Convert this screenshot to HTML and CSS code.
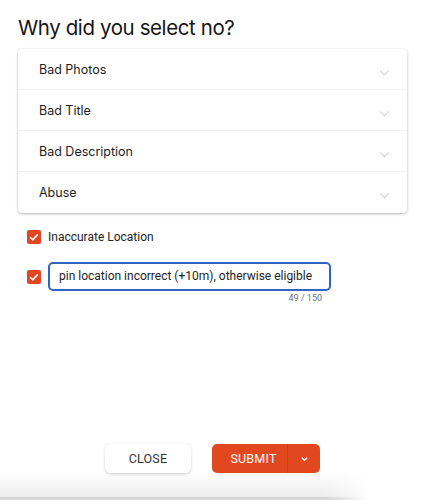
FILE: index.html
```html
<!DOCTYPE html>
<html lang="en">
<head>
    <meta charset="UTF-8">
    <meta name="viewport" content="width=device-width, initial-scale=1.0">
    <title>Why did you select no?</title>
    <link rel="stylesheet" href="styles.css">
</head>
<body>
    <div class="dialog">
        <h1 class="title">Why did you select no?</h1>

        <div class="reasons">
            <div class="reason">
                <span>Bad Photos</span>
                <svg class="chevron" viewBox="0 0 12 8"><path d="M1 1.5l5 5 5-5"/></svg>
            </div>
            <div class="reason">
                <span>Bad Title</span>
                <svg class="chevron" viewBox="0 0 12 8"><path d="M1 1.5l5 5 5-5"/></svg>
            </div>
            <div class="reason">
                <span>Bad Description</span>
                <svg class="chevron" viewBox="0 0 12 8"><path d="M1 1.5l5 5 5-5"/></svg>
            </div>
            <div class="reason">
                <span>Abuse</span>
                <svg class="chevron" viewBox="0 0 12 8"><path d="M1 1.5l5 5 5-5"/></svg>
            </div>
        </div>

        <div class="check-row">
            <span class="checkbox"><svg viewBox="0 0 14 14"><path d="M3.2 7.2l2.6 2.6 5-5.4"/></svg></span>
            <span class="check-label">Inaccurate Location</span>
        </div>

        <div class="check-row note-row">
            <span class="checkbox"><svg viewBox="0 0 14 14"><path d="M3.2 7.2l2.6 2.6 5-5.4"/></svg></span>
            <div class="note">
                <div class="note-input">pin location incorrect (+10m), otherwise eligible</div>
                <div class="counter">49 / 150</div>
            </div>
        </div>

        <div class="actions">
            <button class="btn-close">CLOSE</button>
            <div class="btn-submit">
                <span class="submit-main">SUBMIT</span>
                <span class="submit-more">
                    <svg viewBox="0 0 10 6"><path d="M2 1.5l3 3 3-3"/></svg>
                </span>
            </div>
        </div>
    </div>
</body>
</html>
```

FILE: styles.css
```css
html, body {
    margin: 0;
    height: 100%;
}
body {
    font-family: 'Roboto', 'Liberation Sans', sans-serif;
    color: #1f1f1f;
    overflow: hidden;
    display: flex;
    flex-direction: column;
    /* bottom edge of the sheet: grey line + soft shade, fading out on the right */
    background:
        linear-gradient(to right, rgba(255, 255, 255, 0), #ffffff) 325px bottom / 45px 29px no-repeat,
        linear-gradient(#d6d6d6, #d6d6d6) left bottom / 365px 3px no-repeat,
        linear-gradient(rgba(255, 255, 255, 0), #ececec) left calc(100% - 3px) / 365px 26px no-repeat,
        #ffffff;
}
.dialog {
    flex: 1;
    display: flex;
    flex-direction: column;
    padding: 0 18px;
}
.title {
    font-family: 'Inter', 'Noto Sans', sans-serif;
    font-weight: 400;
    font-size: 20.5px;
    letter-spacing: -0.4px;
    color: #161616;
    margin: 15px 0 9px 0;
    line-height: 25px;
}
.reasons {
    background-color: #ffffff;
    border-radius: 4px;
    box-shadow: 0 1px 3px rgba(0, 0, 0, 0.28), 0 0 1px rgba(0, 0, 0, 0.08);
}
.reason {
    height: 40px;
    display: flex;
    align-items: center;
    justify-content: space-between;
    padding: 0 17px 0 21px;
    border-bottom: 1px solid #f1f1f1;
    font-family: 'Inter', 'Noto Sans', sans-serif;
    font-size: 12.5px;
    color: #1c1c1c;
}
.reason:last-child {
    border-bottom: none;
    height: 41px;
}
.chevron {
    width: 11px;
    height: 7px;
    margin-top: 6px;
    fill: none;
    stroke: #d2d2d2;
    stroke-width: 1.2;
}
.check-row {
    display: flex;
    align-items: center;
    margin: 17px 0 0 9px;
}
.checkbox {
    width: 14px;
    height: 14px;
    border-radius: 2px;
    background-color: #e0461f;
    display: flex;
    align-items: center;
    justify-content: center;
    flex-shrink: 0;
}
.checkbox svg {
    width: 14px;
    height: 14px;
    fill: none;
    stroke: #ffffff;
    stroke-width: 1.6;
}
.check-label {
    margin-left: 7px;
    font-size: 12px;
    color: #222222;
}
.note-row {
    align-items: flex-start;
    margin-top: 18px;
}
.note-row .checkbox {
    margin-top: 8px;
}
.note {
    margin-left: 7px;
    width: 283px;
    display: flex;
    flex-direction: column;
}
.note-input {
    height: 25px;
    border: 2px solid #2e64c4;
    border-radius: 5px;
    padding: 0 9px;
    font-size: 12px;
    line-height: 25px;
    color: #1e1e1e;
    white-space: nowrap;
}
.counter {
    align-self: flex-end;
    margin: 2px 9px 0 0;
    font-size: 9px;
    color: #6e6e6e;
}
.actions {
    margin-top: auto;
    margin-bottom: 27px;
    display: flex;
    justify-content: center;
    gap: 21px;
}
.btn-close {
    width: 86px;
    height: 29px;
    border: none;
    border-radius: 5px;
    background-color: #ffffff;
    box-shadow: 0 1px 3px rgba(0, 0, 0, 0.2);
    font-family: 'Roboto', 'Liberation Sans', sans-serif;
    font-size: 12.5px;
    color: #333333;
    letter-spacing: 0.2px;
}
.btn-submit {
    width: 108px;
    height: 29px;
    border-radius: 5px;
    background-color: #e2481f;
    display: flex;
    color: #ffffff;
    font-size: 12.5px;
    letter-spacing: 0.2px;
}
.submit-main {
    width: 76px;
    padding-left: 8px;
    box-sizing: border-box;
    display: flex;
    align-items: center;
    justify-content: center;
    border-right: 1px solid #cf3f19;
}
.submit-more {
    flex: 1;
    display: flex;
    align-items: center;
    justify-content: center;
}
.submit-more svg {
    width: 9px;
    height: 6px;
    fill: none;
    stroke: #ffffff;
    stroke-width: 1.6;
}
```
